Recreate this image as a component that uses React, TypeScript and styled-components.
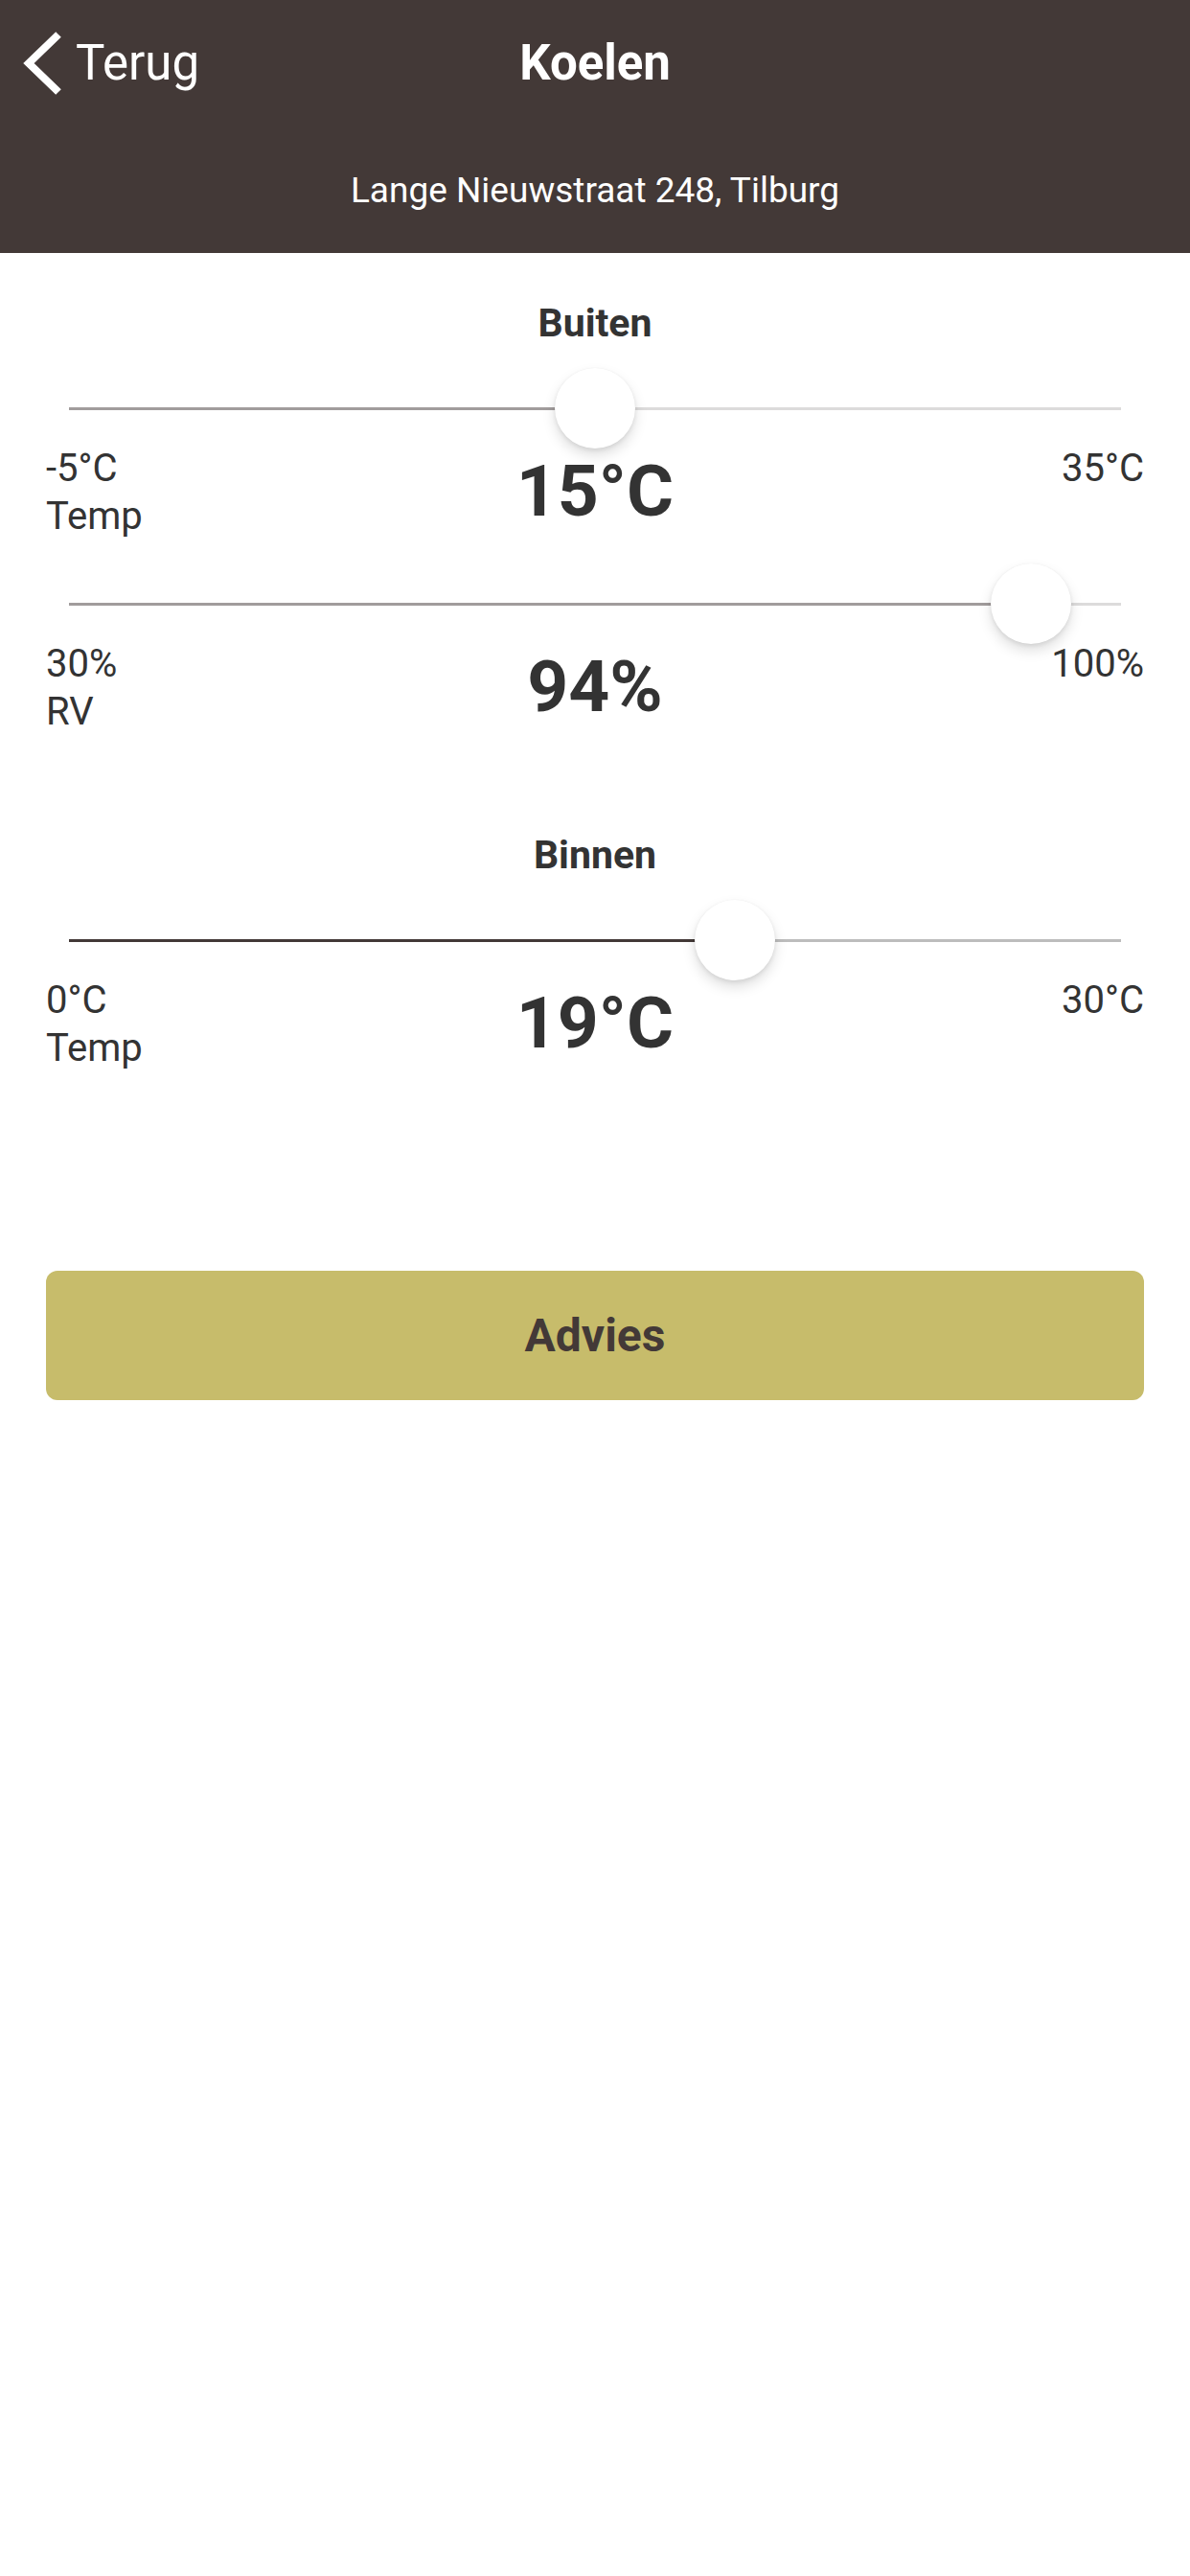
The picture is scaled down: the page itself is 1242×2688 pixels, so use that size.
import React from "react";
import styled, { createGlobalStyle } from "styled-components";

const GlobalStyle = createGlobalStyle`
  html, body { margin: 0; padding: 0; background: #ffffff; }
  body { font-family: Roboto, "Liberation Sans", Arial, sans-serif; -webkit-font-smoothing: antialiased; }
  * { box-sizing: border-box; }
`;

const Page = styled.div`
  width: 1242px;
  min-height: 2688px;
  background: #ffffff;
  display: flex;
  flex-direction: column;
`;

const Header = styled.header`
  height: 264px;
  background: #433937;
  display: flex;
  flex-direction: column;
  color: #ffffff;
`;

const NavRow = styled.div`
  height: 132px;
  display: grid;
  grid-template-columns: 1fr auto 1fr;
  align-items: center;
`;

const BackButton = styled.button`
  justify-self: start;
  display: flex;
  align-items: center;
  gap: 13px;
  margin: 0;
  padding: 0 0 0 24px;
  background: none;
  border: none;
  color: #ffffff;
  font-family: Roboto, "Liberation Sans", Arial, sans-serif;
  font-size: 51px;
  font-weight: 400;
  line-height: 60px;
  cursor: pointer;
`;

const Chevron = styled.svg`
  width: 42px;
  height: 66px;
  display: block;
`;

const Title = styled.h1`
  margin: 0;
  font-size: 51px;
  font-weight: 700;
  line-height: 60px;
`;

const Address = styled.div`
  margin-top: 45px;
  text-align: center;
  font-size: 37px;
  line-height: 44px;
  font-weight: 400;
`;

const Section = styled.section<{ $top: number }>`
  margin-top: ${(p) => p.$top}px;
  display: flex;
  flex-direction: column;
`;

const SectionTitle = styled.h2`
  margin: 0 0 23px;
  text-align: center;
  font-size: 41px;
  line-height: 48px;
  font-weight: 700;
  color: #333333;
`;

const SliderBox = styled.div`
  position: relative;
  height: 84px;
  margin: 0 72px;
  display: flex;
  align-items: center;
`;

const Track = styled.div<{ $fill: string; $rest: string; $pct: number }>`
  width: 100%;
  height: 3px;
  background: linear-gradient(
    to right,
    ${(p) => p.$fill} 0%,
    ${(p) => p.$fill} ${(p) => p.$pct}%,
    ${(p) => p.$rest} ${(p) => p.$pct}%,
    ${(p) => p.$rest} 100%
  );
`;

const Thumb = styled.div`
  position: absolute;
  top: 0;
  width: 84px;
  height: 84px;
  border-radius: 50%;
  background: #ffffff;
  transform: translateX(-50%);
  box-shadow: 0 7px 14px rgba(0, 0, 0, 0.13), 0 2px 4px rgba(0, 0, 0, 0.08),
    0 0 1px rgba(0, 0, 0, 0.06);
`;

const ValueRow = styled.div<{ $after: number }>`
  display: grid;
  grid-template-columns: 1fr auto 1fr;
  align-items: start;
  min-height: 100px;
  padding: 0 48px;
  margin-bottom: ${(p) => p.$after}px;
  color: #333333;
`;

const SideLabels = styled.div<{ $right?: boolean }>`
  justify-self: ${(p) => (p.$right ? "end" : "start")};
  text-align: ${(p) => (p.$right ? "right" : "left")};
  margin-top: -4px;
  font-size: 40px;
  line-height: 50px;
  font-weight: 400;
`;

const BigValue = styled.div`
  font-size: 75px;
  line-height: 88px;
  font-weight: 700;
  text-align: center;
`;

const AdviceButton = styled.button`
  margin: 203px 48px 0;
  height: 135px;
  border: none;
  border-radius: 12px;
  background: #c7bc6b;
  color: #433937;
  font-family: Roboto, "Liberation Sans", Arial, sans-serif;
  font-size: 48px;
  font-weight: 700;
  cursor: pointer;
`;

type SliderProps = {
  min: number;
  max: number;
  value: number;
  fill: string;
  rest: string;
};

function Slider({ min, max, value, fill, rest }: SliderProps) {
  const pct = ((value - min) / (max - min)) * 100;
  return (
    <SliderBox>
      <Track $fill={fill} $rest={rest} $pct={pct} />
      <Thumb style={{ left: `${pct}%` }} />
    </SliderBox>
  );
}

type RowProps = {
  minLabel: string;
  maxLabel: string;
  name: string;
  value: string;
  after: number;
};

function Row({ minLabel, maxLabel, name, value, after }: RowProps) {
  return (
    <ValueRow $after={after}>
      <SideLabels>
        <div>{minLabel}</div>
        <div>{name}</div>
      </SideLabels>
      <BigValue>{value}</BigValue>
      <SideLabels $right>
        <div>{maxLabel}</div>
      </SideLabels>
    </ValueRow>
  );
}

export default function App() {
  return (
    <>
      <GlobalStyle />
      <Page>
        <Header>
          <NavRow>
            <BackButton>
              <Chevron viewBox="0 0 42 66">
                <polyline
                  points="37,3 6,33 37,63"
                  fill="none"
                  stroke="#ffffff"
                  strokeWidth="8"
                  strokeLinecap="butt"
                  strokeLinejoin="miter"
                />
              </Chevron>
              Terug
            </BackButton>
            <Title>Koelen</Title>
            <div />
          </NavRow>
          <Address>Lange Nieuwstraat 248, Tilburg</Address>
        </Header>

        <Section $top={49}>
          <SectionTitle>Buiten</SectionTitle>
          <Slider min={-5} max={35} value={15} fill="#a19c9c" rest="#dcdbdb" />
          <Row minLabel="-5°C" maxLabel="35°C" name="Temp" value="15°C" after={20} />
          <Slider min={30} max={100} value={94} fill="#a19c9c" rest="#dcdbdb" />
          <Row minLabel="30%" maxLabel="100%" name="RV" value="94%" after={0} />
        </Section>

        <Section $top={96}>
          <SectionTitle>Binnen</SectionTitle>
          <Slider min={0} max={30} value={19} fill="#433937" rest="#bdbdbd" />
          <Row minLabel="0°C" maxLabel="30°C" name="Temp" value="19°C" after={0} />
        </Section>

        <AdviceButton>Advies</AdviceButton>
      </Page>
    </>
  );
}
